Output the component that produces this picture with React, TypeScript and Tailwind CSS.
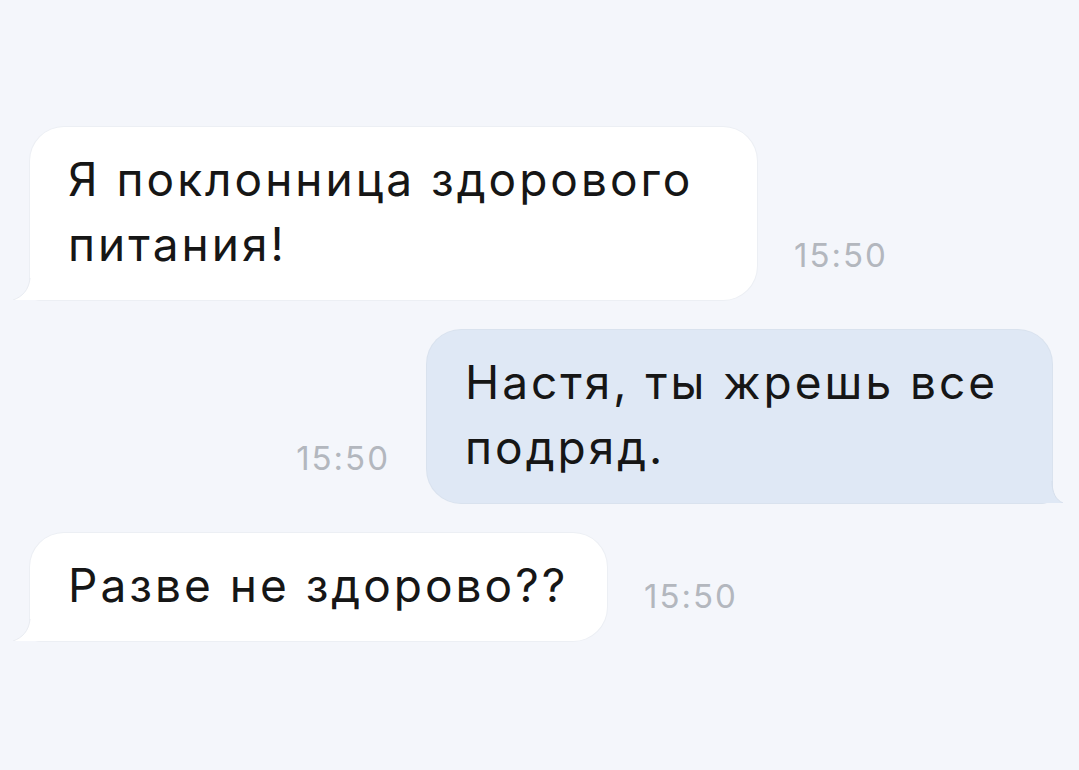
interface Message {
  lines: string[];
  time: string;
  mine: boolean;
  width: string;
}

const MESSAGES: Message[] = [
  { lines: ["Я поклонница здорового", "питания!"], time: "15:50", mine: false, width: "w-[727px]" },
  { lines: ["Настя, ты жрешь все", "подряд."], time: "15:50", mine: true, width: "w-[625px]" },
  { lines: ["Разве не здорово??"], time: "15:50", mine: false, width: "w-[577px]" },
];

// Хвостик пузыря слева (входящее сообщение)
function TailLeft() {
  return (
    <svg
      className="absolute -left-[17px] bottom-0 h-[44px] w-[40px]"
      viewBox="0 0 40 44"
      aria-hidden
    >
      <path d="M17 0 H40 V44 H0 C9 41 16 34 17 22 Z" fill="#ffffff" />
      <path d="M17 22 C16 34 9 41 0 44" fill="none" stroke="#e9ecf2" strokeWidth="1" />
    </svg>
  );
}

// Хвостик справа (исходящее)
function TailRight() {
  return (
    <svg
      className="absolute -right-[11px] bottom-0 h-[44px] w-[36px]"
      viewBox="0 0 36 44"
      aria-hidden
    >
      <path d="M25 0 H0 V44 H36 C29 41 25 34 25 22 Z" fill="#dfe8f5" />
      <path d="M25 22 C25 34 29 41 36 44" fill="none" stroke="#d6dfec" strokeWidth="1" />
    </svg>
  );
}

function Time({ value }: { value: string }) {
  return (
    <span className="mb-[25px] text-[33px] leading-[40px] tracking-[2px] text-[#b3b7be] font-['Inter',sans-serif]">
      {value}
    </span>
  );
}

function Bubble({ msg }: { msg: Message }) {
  return (
    <div
      className={`relative ${msg.width} pl-[38px] pt-[20px] pb-[23px] text-[46px] leading-[65px] tracking-[3px] text-[#161616] whitespace-nowrap ${
        msg.mine
          ? "rounded-[34px] rounded-br-[10px] bg-[#dfe8f5] shadow-[0_0_0_1px_#d9e2ee]"
          : "rounded-[34px] rounded-bl-[10px] bg-white shadow-[0_0_0_1px_#eceff4]"
      }`}
    >
      {msg.mine ? <TailRight /> : <TailLeft />}
      <div className="relative">
        {msg.lines.map((l) => (
          <div key={l}>{l}</div>
        ))}
      </div>
    </div>
  );
}

export default function App() {
  return (
    <div className="min-h-screen w-full bg-[#f4f6fb] pt-[127px] pl-[30px] pr-[27px] font-['Inter',sans-serif]">
      <div className="flex flex-col gap-[30px]">
        {MESSAGES.map((m, i) => (
          <div
            key={i}
            className={`flex items-end gap-[37px] ${m.mine ? "justify-end" : "justify-start"}`}
          >
            {m.mine && <Time value={m.time} />}
            <Bubble msg={m} />
            {!m.mine && <Time value={m.time} />}
          </div>
        ))}
      </div>
    </div>
  );
}
